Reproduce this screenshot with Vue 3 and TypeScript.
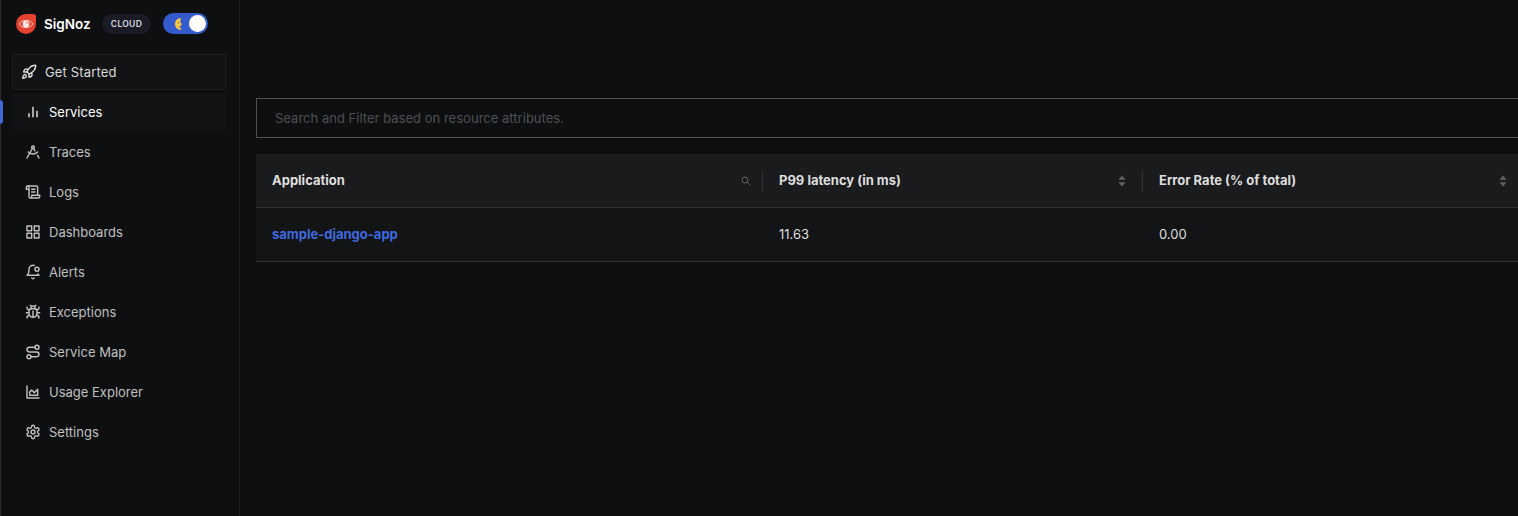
<script setup lang="ts">
interface NavItem {
  label: string
  paths: string[]
  circles?: [number, number, number][]
  active?: boolean
}

const navItems: NavItem[] = [
  { label: 'Services', paths: ['M18 20V10', 'M12 20V4', 'M6 20v-6'], active: true },
  {
    label: 'Traces',
    paths: ['m3 21 8.02-14.26', 'm12.99 6.74 1.93 3.44', 'M19 12c-3.87 4-10.13 4-14 0', 'm21 21-2.16-3.84'],
    circles: [[12, 5, 2]],
  },
  {
    label: 'Logs',
    paths: [
      'M8 21h12a2 2 0 0 0 2-2v-2H10v2a2 2 0 1 1-4 0V5a2 2 0 1 0-4 0v3h4',
      'M19 17V5a2 2 0 0 0-2-2H4',
      'M15 8h-5',
      'M15 12h-5',
    ],
  },
  {
    label: 'Dashboards',
    paths: ['M3 3h7v7H3z', 'M14 3h7v7h-7z', 'M14 14h7v7h-7z', 'M3 14h7v7H3z'],
  },
  {
    label: 'Alerts',
    paths: [
      'M19.4 14.9C20.2 16.4 21 17 21 17H3s3-2 3-9c0-3.3 2.7-6 6-6 .7 0 1.3.1 1.9.3',
      'M10.3 21a1.94 1.94 0 0 0 3.4 0',
    ],
    circles: [[18, 8, 3]],
  },
  {
    label: 'Exceptions',
    paths: [
      'm8 2 1.88 1.88',
      'M14.12 3.88 16 2',
      'M9 7.13v-1a3.003 3.003 0 1 1 6 0v1',
      'M12 20c-3.3 0-6-2.7-6-6v-3a4 4 0 0 1 4-4h4a4 4 0 0 1 4 4v3c0 3.3-2.7 6-6 6',
      'M12 20v-9',
      'M6.53 9C4.6 8.8 3 7.1 3 5',
      'M6 13H2',
      'M3 21c0-2.1 1.7-3.9 3.8-4',
      'M20.97 5c0 2.1-1.6 3.8-3.5 4',
      'M22 13h-4',
      'M17.2 17c2.1.1 3.8 1.9 3.8 4',
    ],
  },
  {
    label: 'Service Map',
    paths: ['M9 19h8.5a3.5 3.5 0 0 0 0-7h-11a3.5 3.5 0 0 1 0-7H15'],
    circles: [[6, 19, 3], [18, 5, 3]],
  },
  { label: 'Usage Explorer', paths: ['M3 3v18h18', 'M7 12v5h12V8l-5 5-4-4Z'] },
  {
    label: 'Settings',
    paths: [
      'M12.22 2h-.44a2 2 0 0 0-2 2v.18a2 2 0 0 1-1 1.73l-.43.25a2 2 0 0 1-2 0l-.15-.08a2 2 0 0 0-2.73.73l-.22.38a2 2 0 0 0 .73 2.73l.15.1a2 2 0 0 1 1 1.72v.51a2 2 0 0 1-1 1.74l-.15.09a2 2 0 0 0-.73 2.73l.22.38a2 2 0 0 0 2.73.73l.15-.08a2 2 0 0 1 2 0l.43.25a2 2 0 0 1 1 1.73V20a2 2 0 0 0 2 2h.44a2 2 0 0 0 2-2v-.18a2 2 0 0 1 1-1.73l.43-.25a2 2 0 0 1 2 0l.15.08a2 2 0 0 0 2.73-.73l.22-.39a2 2 0 0 0-.73-2.73l-.15-.08a2 2 0 0 1-1-1.74v-.5a2 2 0 0 1 1-1.74l.15-.09a2 2 0 0 0 .73-2.73l-.22-.38a2 2 0 0 0-2.73-.73l-.15.08a2 2 0 0 1-2 0l-.43-.25a2 2 0 0 1-1-1.73V4a2 2 0 0 0-2-2z',
    ],
    circles: [[12, 12, 3]],
  },
]

const services = [{ name: 'sample-django-app', latency: '11.63', errorRate: '0.00' }]
</script>

<template>
  <div class="app">
    <aside class="sidebar">
      <header class="brand">
        <svg class="logo" width="20" height="20" viewBox="0 0 20 20">
          <path d="M10 0H17.5A2.5 2.5 0 0 1 20 2.5V10A10 10 0 1 1 10 0Z" fill="#e5432f" />
          <path d="M3 10C6.2 5.2 13.8 5.2 17 10C13.8 14.8 6.2 14.8 3 10Z" fill="none" stroke="#f6c8c1" stroke-width="1" />
          <circle cx="10" cy="10" r="3.3" fill="#fbe9e6" />
          <path d="M10 8.2A1.8 1.8 0 0 1 11.8 10" fill="none" stroke="#e5432f" stroke-width=".7" />
        </svg>
        <span class="name">SigNoz</span>
        <span class="plan">CLOUD</span>
        <button class="switch" aria-label="Dark mode">
          <svg class="moon" width="9" height="14" viewBox="0 0 9 14">
            <path d="M7.4 1.2C3.6.8 1 3.4 1 7s2.7 6.2 6.7 5.7C6.4 11.8 5.9 10.9 6 9.8L7 9.2 6.5 8.3 7.9 7.4 6.5 5.2C6 3.6 6.4 2.1 7.4 1.2Z" fill="#f8c944" />
            <circle cx="4.4" cy="5.7" r=".7" fill="#79551a" />
            <path d="M4 9.2Q5 10 6 9.3" fill="none" stroke="#a77418" stroke-width=".7" />
          </svg>
          <span class="knob"></span>
        </button>
      </header>

      <a class="start">
        <svg class="icon" viewBox="0 0 24 24">
          <path d="M4.5 16.5c-1.5 1.26-2 5-2 5s3.74-.5 5-2c.71-.84.7-2.13-.09-2.91a2.18 2.18 0 0 0-2.91-.09z" />
          <path d="m12 15-3-3a22 22 0 0 1 2-3.95A12.88 12.88 0 0 1 22 2c0 2.72-.78 7.5-6 11a22.35 22.35 0 0 1-4 2z" />
          <path d="M9 12H4s.55-3.03 2-4c1.62-1.08 5 0 5 0" />
          <path d="M12 15v5s3.03-.55 4-2c1.08-1.62 0-5 0-5" />
        </svg>
        <span>Get Started</span>
      </a>

      <nav class="nav">
        <div v-for="item in navItems" :key="item.label" class="row" :class="{ active: item.active }">
          <span class="marker"></span>
          <a class="link">
            <svg class="icon" viewBox="0 0 24 24">
              <path v-for="d in item.paths" :key="d" :d="d" />
              <circle v-for="(c, i) in item.circles" :key="i" :cx="c[0]" :cy="c[1]" :r="c[2]" />
            </svg>
            <span>{{ item.label }}</span>
          </a>
        </div>
      </nav>
    </aside>

    <main class="content">
      <div class="filter">Search and Filter based on resource attributes.</div>
      <div class="table">
        <div class="grid head">
          <div class="cell">
            <span>Application</span>
            <svg class="search" width="10" height="10" viewBox="0 0 10 10">
              <circle cx="4" cy="4" r="3" />
              <path d="M6.2 6.2 9.3 9.3" />
            </svg>
          </div>
          <div class="cell">
            <span>P99 latency (in ms)</span>
            <svg class="sort" width="8" height="12" viewBox="0 0 8 12">
              <path d="M4 .6 7.6 4.8H.4Z M4 11.4 7.6 7.2H.4Z" />
            </svg>
          </div>
          <div class="cell">
            <span>Error Rate (% of total)</span>
            <svg class="sort" width="8" height="12" viewBox="0 0 8 12">
              <path d="M4 .6 7.6 4.8H.4Z M4 11.4 7.6 7.2H.4Z" />
            </svg>
          </div>
        </div>
        <div v-for="s in services" :key="s.name" class="grid body">
          <div class="cell"><a class="service">{{ s.name }}</a></div>
          <div class="cell">{{ s.latency }}</div>
          <div class="cell">{{ s.errorRate }}</div>
        </div>
      </div>
    </main>
  </div>
</template>

<style>
body {
  background: #0e0f11;
}
</style>

<style scoped>
.app {
  display: flex;
  height: 516px;
  overflow: hidden;
  box-sizing: border-box;
  background: #0e0f11;
  color: #dededf;
  font: 13px/22px Inter, sans-serif;
}
.app * {
  box-sizing: border-box;
}
.sidebar {
  flex: 0 0 240px;
  border-left: 1px solid #2b2c2e;
  border-right: 1px solid #1c1d20;
}
.brand {
  display: flex;
  align-items: center;
  height: 48px;
  padding-left: 15px;
}
.name {
  width: 46px;
  margin-left: 8px;
  color: #fff;
  font-size: 13.5px;
  font-weight: 600;
  white-space: nowrap;
}
.plan {
  width: 49px;
  height: 20px;
  margin-left: 12px;
  border-radius: 10px;
  background: #1a1b25;
  color: #d8dae4;
  font-size: 8.5px;
  font-weight: 600;
  line-height: 20px;
  letter-spacing: 0.3px;
  text-align: center;
}
.switch {
  display: flex;
  align-items: center;
  justify-content: space-between;
  width: 45px;
  height: 21px;
  margin: -1px 0 0 12px;
  padding: 0 2px 0 11px;
  border: 0;
  border-radius: 11px;
  background: #345bcb;
}
.knob {
  width: 17px;
  height: 17px;
  border-radius: 50%;
  background: #fff;
}
.start {
  display: flex;
  align-items: center;
  gap: 8px;
  width: 214px;
  height: 36px;
  margin: 6px 0 0 11px;
  padding-left: 8px;
  border: 1px solid #1d1e21;
  border-radius: 2px;
  background: #121315;
  color: #dadadb;
  letter-spacing: 0.15px;
}
.icon {
  flex: none;
  width: 16px;
  height: 16px;
  fill: none;
  stroke: currentColor;
  stroke-width: 2.15;
  stroke-linecap: round;
  stroke-linejoin: round;
}
.nav {
  display: flex;
  flex-direction: column;
  gap: 4px;
  margin: 4px 0 0 -1px;
}
.row {
  display: flex;
  align-items: center;
  gap: 9px;
  height: 36px;
  color: #c0c0c1;
}
.marker {
  width: 3px;
  height: 24px;
  border-radius: 0 3px 3px 0;
}
.link {
  display: flex;
  align-items: center;
  gap: 8px;
  width: 214px;
  height: 36px;
  padding-left: 13px;
  border-radius: 3px;
}
.active .marker {
  background: #4068d8;
}
.active .link {
  background: #121315;
}
.active .link span {
  color: #fff;
}
.active .icon {
  stroke-width: 2.6;
  stroke-linecap: butt;
}
.content {
  flex: 1;
  min-width: 0;
  padding: 98px 0 0 16px;
}
.filter {
  height: 40px;
  margin-right: -10px;
  padding-left: 18px;
  border: 1px solid #505153;
  color: #4e4f51;
  line-height: 38px;
  letter-spacing: 0.02px;
}
.table {
  margin-top: 16px;
}
.grid {
  display: grid;
  grid-template-columns: 507px 380px 381px;
  width: 1268px;
  height: 54px;
  border-bottom: 1px solid #2e2f31;
}
.cell {
  display: flex;
  align-items: center;
  justify-content: space-between;
  padding: 0 16px;
}
.head {
  background: #1a1b1d;
  font-weight: 700;
}
.head .cell {
  padding-right: 12px;
  background: linear-gradient(#303133, #303133) right center / 1px 22px no-repeat;
}
.head span {
  padding-bottom: 2px;
}
.head .sort {
  margin-right: 5px;
}
.body {
  background: #131416;
}
.body .cell {
  padding-bottom: 2px;
}
.service {
  color: #3e69df;
  font-weight: 700;
}
.search {
  fill: none;
  stroke: #606163;
}
.sort {
  fill: #606163;
}
</style>
